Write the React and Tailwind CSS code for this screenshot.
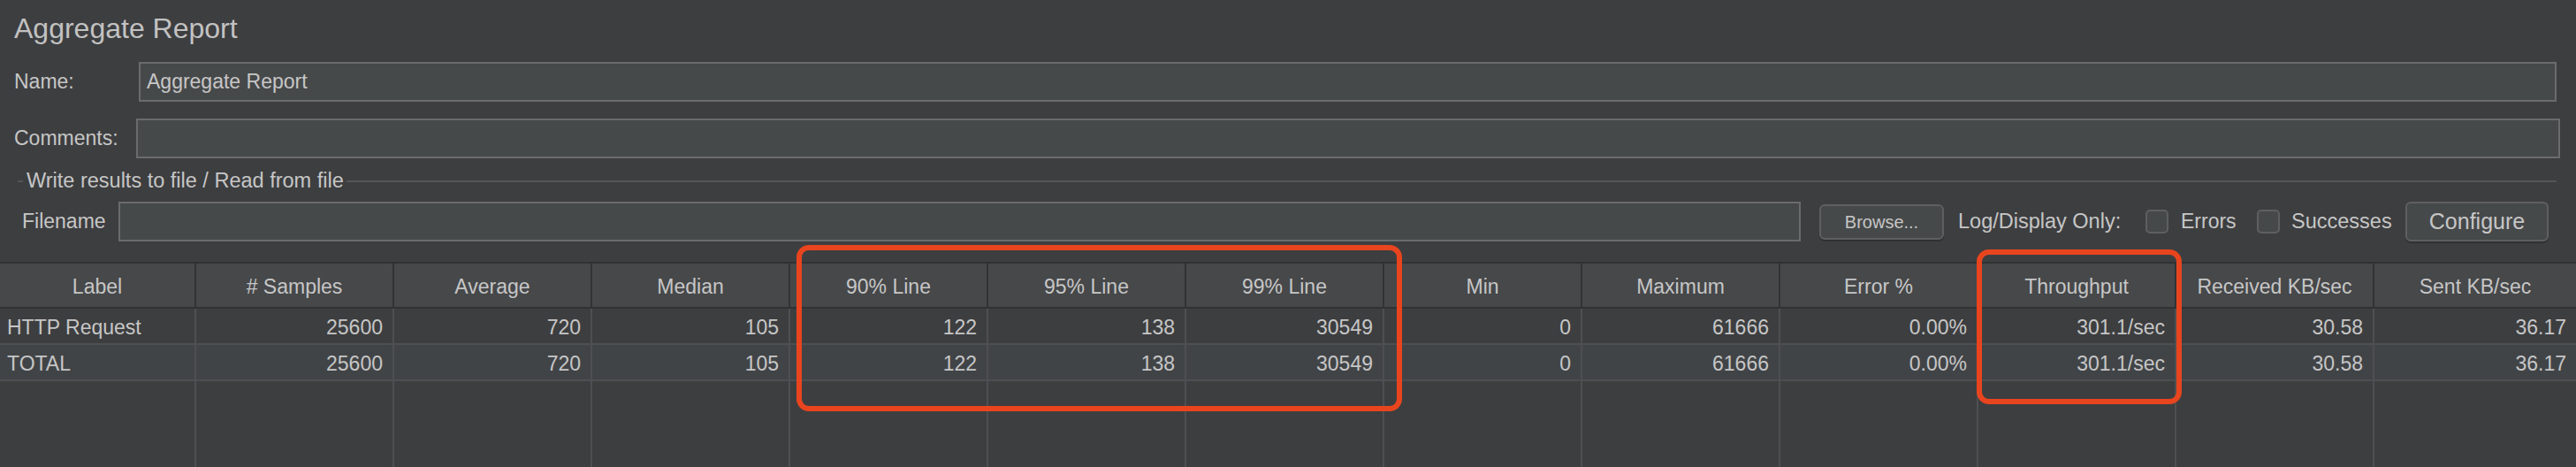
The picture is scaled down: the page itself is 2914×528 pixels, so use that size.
import React from 'react';

const columns = [
  'Label',
  '# Samples',
  'Average',
  'Median',
  '90% Line',
  '95% Line',
  '99% Line',
  'Min',
  'Maximum',
  'Error %',
  'Throughput',
  'Received KB/sec',
  'Sent KB/sec',
];

const rows = [
  ['HTTP Request', '25600', '720', '105', '122', '138', '30549', '0', '61666', '0.00%', '301.1/sec', '30.58', '36.17'],
  ['TOTAL', '25600', '720', '105', '122', '138', '30549', '0', '61666', '0.00%', '301.1/sec', '30.58', '36.17'],
];

const gridCols = 'grid grid-cols-[222px_repeat(11,224px)_1fr]';

function TextField({ value, className }) {
  return (
    <div
      className={`flex h-full flex-1 items-center border-2 border-[#6a6b6d] bg-[#46494a] pl-[7px] text-[23px] leading-none ${className}`}
    >
      {value}
    </div>
  );
}

function Checkbox() {
  return <div className="h-[27px] w-[26px] shrink-0 rounded-[5px] border-2 border-[#5d5f61] bg-[#46494a]" />;
}

export default function App() {
  return (
    <div className="relative flex h-[528px] w-[2914px] flex-col overflow-hidden bg-[#3d3e40] font-['Liberation_Sans',Arial,sans-serif] text-[#c6c6c6]">
      {/* Header form */}
      <div className="pl-[16px]">
        <div className="mt-[16px] h-[32px] text-[32px] leading-none text-[#c2c2c2]">Aggregate Report</div>

        <div className="mr-[22px] mt-[22px] flex h-[45px] items-center">
          <span className="w-[141px] text-[23px] leading-none">Name:</span>
          <TextField value="Aggregate Report" />
        </div>

        <div className="mr-[18px] mt-[19px] flex h-[45px] items-center">
          <span className="w-[138px] text-[23px] leading-none">Comments:</span>
          <TextField value="" />
        </div>

        {/* Write results group */}
        <div className="ml-[4px] mr-[22px] mt-[14px] flex h-[24px] items-center">
          <div className="h-[2px] w-[6px] bg-[#535557]" />
          <span className="ml-[4px] whitespace-nowrap text-[23.5px] leading-none">Write results to file / Read from file</span>
          <div className="ml-[3px] h-[2px] flex-1 bg-[#535557]" />
        </div>

        <div className="ml-[9px] mr-[31px] mt-[11px] flex h-[45px] items-center">
          <span className="w-[109px] text-[23px] leading-none">Filename</span>
          <TextField value="" />
          <button className="ml-[21px] h-[40px] w-[141px] shrink-0 rounded-[6px] border-2 border-[#5d5f61] bg-[#46494a] text-[20px] leading-none text-[#c6c6c6] shadow-[0_2px_0_#303133]">
            Browse...
          </button>
          <span className="ml-[16px] w-[189px] shrink-0 whitespace-nowrap text-[23.5px] leading-none">Log/Display Only:</span>
          <div className="ml-[23px]">
            <Checkbox />
          </div>
          <span className="ml-[14px] w-[62px] shrink-0 text-[23px] leading-none">Errors</span>
          <div className="ml-[24px]">
            <Checkbox />
          </div>
          <span className="ml-[13px] w-[114px] shrink-0 text-[23.5px] leading-none">Successes</span>
          <button className="ml-[15px] h-[45px] w-[162px] shrink-0 rounded-[6px] border-2 border-[#5d5f61] bg-[#46494a] text-[25px] leading-none text-[#c6c6c6] shadow-[0_2px_0_#303133]">
            Configure
          </button>
        </div>
      </div>

      {/* Results table */}
      <div className="mt-[23px] flex flex-1 flex-col border-t-2 border-[#313234]">
        <div className={`${gridCols} h-[51px] border-b-2 border-[#313234] bg-[#46484a]`}>
          {columns.map((col, i) => (
            <div
              key={col}
              className={`flex items-center justify-center pt-[4px] text-[23px] leading-none ${
                i < columns.length - 1 ? 'border-r-2 border-[#323335]' : ''
              }`}
            >
              {col}
            </div>
          ))}
        </div>

        {rows.map((row, r) => (
          <div
            key={r}
            className={`${gridCols} h-[41px] border-b-2 border-[#4d4f51] ${r === 1 ? 'bg-[#414447]' : 'bg-[#3d3e40]'}`}
          >
            {row.map((cell, i) => (
              <div
                key={i}
                className={`flex items-center pt-[3px] text-[23px] leading-none ${
                  i === 0 ? 'justify-start pl-[8px]' : 'justify-end pr-[11px]'
                } ${i < row.length - 1 ? 'border-r-2 border-[#4d4f51]' : ''}`}
              >
                {cell}
              </div>
            ))}
          </div>
        ))}

        <div className={`${gridCols} flex-1`}>
          {columns.map((col, i) => (
            <div key={col} className={i < columns.length - 1 ? 'border-r-2 border-[#4d4f51]' : ''} />
          ))}
        </div>
      </div>

      {/* Highlight annotations */}
      <div className="absolute left-[901px] top-[277px] h-[188px] w-[685px] rounded-[14px] border-[6px] border-[#e8451f]" />
      <div className="absolute left-[2236px] top-[282px] h-[175px] w-[232px] rounded-[14px] border-[6px] border-[#e8451f]" />
    </div>
  );
}
